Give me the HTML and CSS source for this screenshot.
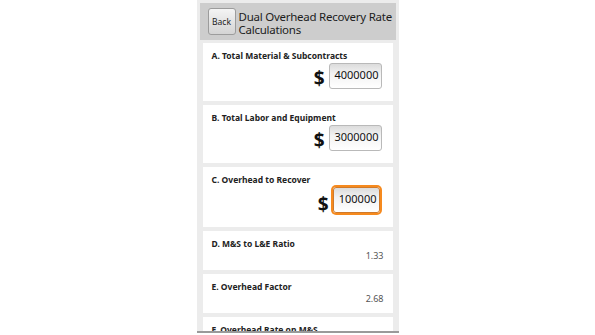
FILE: index.html
```html
<!DOCTYPE html>
<html lang="en">
<head>
    <meta charset="UTF-8">
    <title>Dual Overhead Recovery Rate Calculations</title>
    <meta name="viewport" content="width=device-width, initial-scale=1">
    <link rel="stylesheet" href="styles.css">
</head>
<body>

    <div class="phone">
        <header class="title-bar">
            <button class="back-btn">Back</button>
            <h1>Dual Overhead Recovery Rate<br>Calculations</h1>
        </header>

        <div class="card">
            <div class="card-label">A. Total Material &amp; Subcontracts</div>
            <div class="input-row">
                <span class="dollar">$</span>
                <input class="amount" type="text" value="4000000">
            </div>
        </div>

        <div class="card">
            <div class="card-label">B. Total Labor and Equipment</div>
            <div class="input-row">
                <span class="dollar">$</span>
                <input class="amount" type="text" value="3000000">
            </div>
        </div>

        <div class="card">
            <div class="card-label">C. Overhead to Recover</div>
            <div class="input-row">
                <span class="dollar">$</span>
                <input class="amount focused" type="text" value="100000">
            </div>
        </div>

        <div class="card result">
            <div class="card-label">D. M&amp;S to L&amp;E Ratio</div>
            <div class="card-value">1.33</div>
        </div>

        <div class="card result">
            <div class="card-label">E. Overhead Factor</div>
            <div class="card-value">2.68</div>
        </div>

        <div class="card result">
            <div class="card-label">F. Overhead Rate on M&amp;S</div>
            <div class="card-value">&nbsp;</div>
        </div>
    </div>

</body>
</html>
```

FILE: styles.css
```css
body {
    font-family: 'Noto Sans', 'Open Sans', sans-serif;
    background: #ffffff;
    margin: 0;
    padding: 0;
}

.phone {
    width: 202px;
    height: 333px;
    margin: 0 auto;
    padding: 3px 3px 0;
    box-sizing: border-box;
    background: #ececec;
    overflow: hidden;
    border-bottom: 2px solid #9a9a9a;
}

.title-bar {
    display: flex;
    align-items: center;
    gap: 3px;
    height: 37px;
    padding: 0 2px 0 8px;
    background-color: #cdcdcd;
    margin-bottom: 3px;
}

.back-btn {
    flex: none;
    width: 28px;
    height: 27px;
    padding: 0;
    font-family: inherit;
    font-size: 8.5px;
    color: #222;
    background: linear-gradient(#f4f4f4, #d4d4d4);
    border: 1px solid #9c9c9c;
    border-radius: 3px;
}

h1 {
    margin: 2px 0 0;
    font-size: 11.5px;
    font-weight: normal;
    line-height: 13px;
    color: #1c1c1c;
    letter-spacing: -0.25px;
    white-space: nowrap;
}

.card {
    background: white;
    margin: 0 3px 4px;
    padding: 7px 11px 12px 9px;
}

.card-label {
    font-size: 8.5px;
    font-weight: bold;
    line-height: 12px;
    color: #222;
}

.input-row {
    display: flex;
    justify-content: flex-end;
    align-items: flex-end;
    gap: 4px;
    margin-top: 1px;
}

.dollar {
    font-size: 19px;
    font-weight: bold;
    line-height: 22px;
    color: #111;
}

.amount {
    width: 53px;
    height: 26px;
    box-sizing: border-box;
    padding: 0 2px 3px 0;
    font-family: inherit;
    font-size: 11px;
    color: #111;
    text-align: right;
    background: linear-gradient(#dcdcdc, #f2f2f2 40%, #ffffff);
    border: 1px solid #b9b9b9;
    border-radius: 3px;
    outline: none;
}

.amount.focused {
    width: 47px;
    height: 26px;
    margin: 0 2px 2px 0;
    box-shadow: 0 0 0 2px #f68a1e;
    border-color: #d07a2a;
}

.card.result {
    padding-bottom: 8px;
}

.card-value {
    font-size: 9px;
    line-height: 12px;
    color: #555;
    text-align: right;
    margin-right: -2px;
}
```
